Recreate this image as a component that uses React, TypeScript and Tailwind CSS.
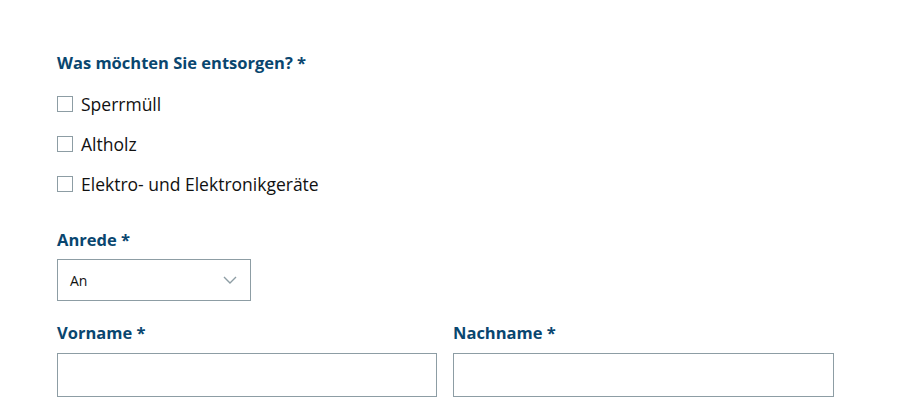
import React from "react";

const labelCls = "font-['Open_Sans',sans-serif] font-bold text-[16.5px] leading-[20px] text-[#09466f]";

function Check({ label }: { label: string }) {
  return (
    <label className="flex items-center h-[20px] gap-[8px]">
      <span className="w-[16px] h-[16px] border border-[#8d9da4] bg-white shrink-0" />
      <span className="font-['Open_Sans',sans-serif] text-[17.5px] leading-[20px] text-[#111]">{label}</span>
    </label>
  );
}

export default function App() {
  return (
    <div className="w-[910px] h-[414px] bg-white overflow-hidden pl-[57px] pt-[53px]">
      <div className={labelCls}>Was möchten Sie entsorgen? *</div>
      <div className="mt-[21px] flex flex-col gap-[20px]">
        <Check label="Sperrmüll" />
        <Check label="Altholz" />
        <Check label="Elektro- und Elektronikgeräte" />
      </div>
      <div className={labelCls + " mt-[36px]"}>Anrede *</div>
      <div className="mt-[9px] w-[194px] h-[42px] border border-[#8d9da4] flex items-center justify-between pl-[12px] pr-[13px]">
        <span className="font-['Open_Sans',sans-serif] text-[14px] text-[#111]">An</span>
        <svg width="14" height="8" viewBox="0 0 14 8" fill="none">
          <path d="M1 1l6 6 6-6" stroke="#8d9da4" strokeWidth="1.4" />
        </svg>
      </div>
      <div className="mt-[22px] flex gap-[16px]">
        <div className="w-[380px]">
          <div className={labelCls}>Vorname *</div>
          <div className="mt-[10px] h-[44px] border border-[#8d9da4]" />
        </div>
        <div className="w-[381px]">
          <div className={labelCls}>Nachname *</div>
          <div className="mt-[10px] h-[44px] border border-[#8d9da4]" />
        </div>
      </div>
    </div>
  );
}
